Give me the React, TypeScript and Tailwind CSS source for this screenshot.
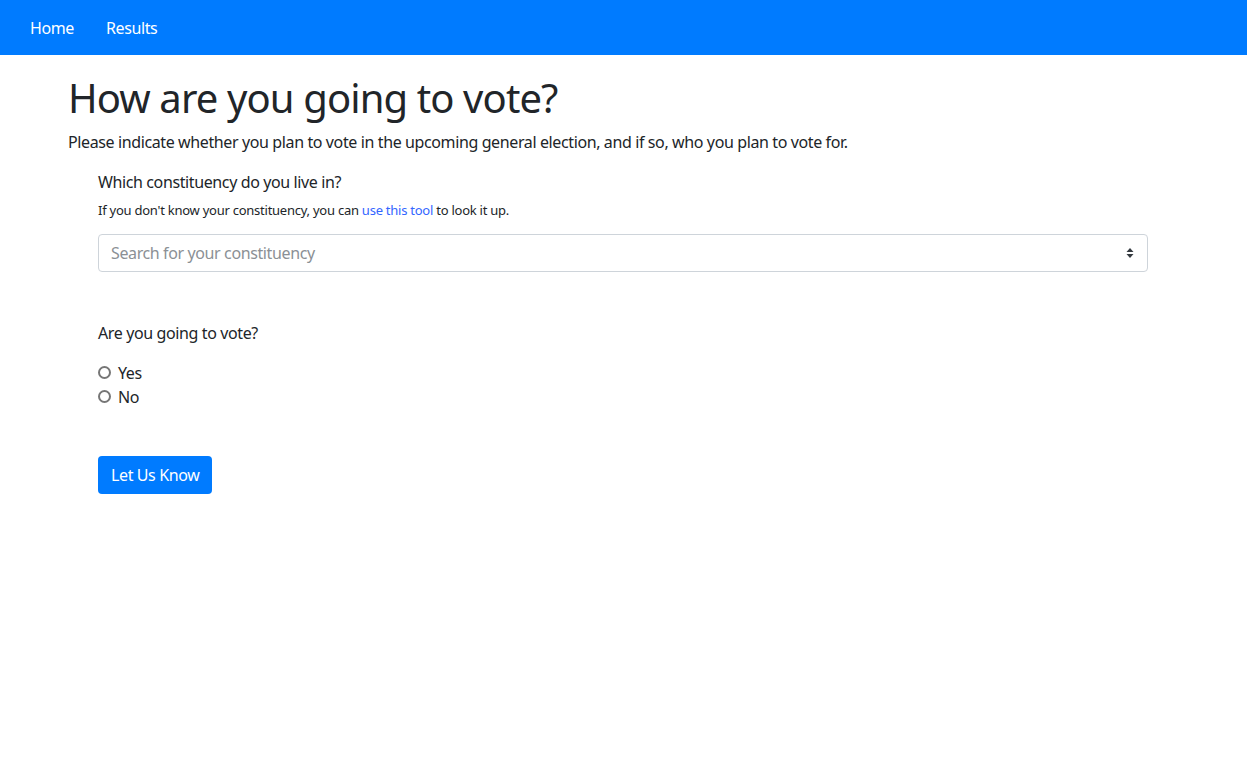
import React from "react";

export default function App() {
  const font = { fontFamily: '"Segoe UI", "Noto Sans", "Open Sans", sans-serif' };
  return (
    <div className="min-h-[767px] bg-white text-[#212529] tracking-[-0.024em]" style={font}>
      <nav className="h-[55px] bg-[#007bff] flex items-center px-[14px]">
        <a className="text-white text-[16px] px-[16px] leading-[24px]">Home</a>
        <a className="text-white text-[16px] px-[16px] leading-[24px]">Results</a>
      </nav>
      <div className="w-[1110px] ml-[68px]">
        <h1 className="text-[40px] leading-[48px] font-normal mt-[19px] mb-[8px] text-[#212529] tracking-[-0.022em]">How are you going to vote?</h1>
        <p className="text-[16px] leading-[24px] mb-[16px]">
          Please indicate whether you plan to vote in the upcoming general election, and if so, who you plan to vote for.
        </p>
        <div className="mx-[30px]">
          <div>
            <label className="block text-[16px] leading-[24px] mb-[6px]">Which constituency do you live in?</label>
            <p className="text-[13px] leading-[20px] mb-[14px] tracking-[-0.019em]">
              If you don't know your constituency, you can <a className="text-[#3366ff]">use this tool</a> to look it up.
            </p>
            <div className="h-[38px] border border-[#ced4da] rounded-[4px] flex items-center justify-between pl-[12px] pr-[13px]">
              <span className="text-[16px] text-[#8b9095]">Search for your constituency</span>
              <svg width="8" height="12" viewBox="0 0 8 12">
                <path d="M4 1 L7.5 5 H0.5 Z" fill="#343a40" />
                <path d="M4 11 L7.5 7 H0.5 Z" fill="#343a40" />
              </svg>
            </div>
          </div>
          <div className="mt-[49px]">
            <div className="text-[16px] leading-[24px] mb-[16px]">Are you going to vote?</div>
            {["Yes", "No"].map((o) => (
              <label key={o} className="flex items-center h-[24px] text-[16px]">
                <span className="w-[13px] h-[13px] rounded-full border-[2px] border-[#767676] mr-[7px] mt-[-2px]" />
                {o}
              </label>
            ))}
          </div>
          <button className="mt-[47px] h-[38px] px-[13px] bg-[#007bff] text-white text-[16px] rounded-[4px]">
            Let Us Know
          </button>
        </div>
      </div>
    </div>
  );
}
